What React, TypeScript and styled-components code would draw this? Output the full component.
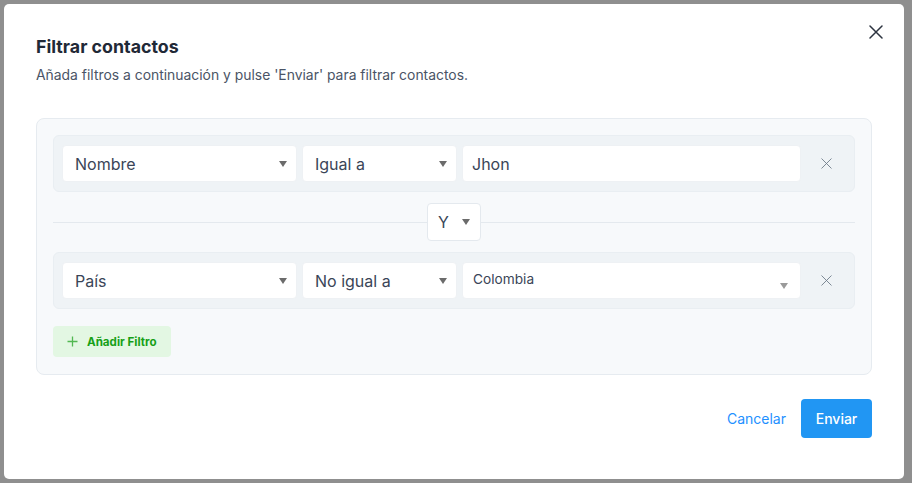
import React from "react";
import styled, { createGlobalStyle } from "styled-components";

const Global = createGlobalStyle`
  html, body { margin: 0; padding: 0; background: #8f8f8f; }
  body { font-family: Inter, "Noto Sans", "Liberation Sans", sans-serif; }
  * { box-sizing: border-box; }
`;

const Backdrop = styled.div`
  width: 912px;
  height: 483px;
  padding: 4px 8px 4px 4px;
  background: #8f8f8f;
  overflow: hidden;
`;

const Modal = styled.div`
  position: relative;
  width: 900px;
  height: 475px;
  background: #fff;
  border-radius: 5px;
  padding: 31px 32px 0 32px;
  display: flex;
  flex-direction: column;
`;

const CloseBtn = styled.button`
  position: absolute;
  top: 16px;
  right: 16px;
  width: 24px;
  height: 24px;
  border: 0;
  background: none;
  padding: 0;
  display: flex;
  align-items: center;
  justify-content: center;
  color: #2d3440;
`;

const Title = styled.h2`
  margin: 0;
  font-size: 17.8px;
  line-height: 24px;
  font-weight: 700;
  color: #1f2937;
`;

const Subtitle = styled.p`
  margin: 6px 0 0;
  font-size: 13.9px;
  line-height: 20px;
  color: #4a5466;
`;

const Panel = styled.div`
  margin-top: 33px;
  background: #f7f9fb;
  border: 1px solid #e6ebf0;
  border-radius: 8px;
  padding: 16px 16px 17px 16px;
`;

const Row = styled.div`
  display: grid;
  grid-template-columns: 235px 155px 339px 1fr;
  column-gap: 5px;
  align-items: center;
  background: #eff3f6;
  border: 1px solid #e9eef2;
  border-radius: 6px;
  padding: 9px 8px;
`;

const Select = styled.div<{ $small?: boolean }>`
  height: 37px;
  background: #fff;
  border-radius: 4px;
  border: 1px solid #eef1f4;
  display: flex;
  align-items: ${(p) => (p.$small ? "flex-start" : "center")};
  justify-content: space-between;
  padding: ${(p) => (p.$small ? "8px 12px 0 10px" : "0 9px 0 12px")};
  font-size: ${(p) => (p.$small ? "13.7px" : "16px")};
  color: #3a4557;
`;

const Input = styled.div`
  height: 37px;
  background: #fff;
  border-radius: 4px;
  border: 1px solid #eef1f4;
  display: flex;
  align-items: center;
  padding: 0 9px;
  font-size: 16px;
  color: #3a4557;
`;

const Caret = styled.span<{ $light?: boolean; $low?: boolean }>`
  width: 0;
  height: 0;
  border-left: 4.5px solid transparent;
  border-right: 4.5px solid transparent;
  border-top: 6px solid ${(p) => (p.$light ? "#9a9a9a" : "#6b6b6b")};
  margin-top: ${(p) => (p.$low ? "12px" : "0")};
`;

const RemoveBtn = styled.button`
  border: 0;
  background: none;
  padding: 0;
  display: flex;
  align-items: center;
  justify-content: center;
  height: 37px;
  color: #6b7785;
`;

const Connector = styled.div`
  display: flex;
  align-items: center;
  justify-content: center;
  margin: 11px 0 11px;
  position: relative;
  &::before {
    content: "";
    position: absolute;
    left: 0;
    right: 0;
    top: 50%;
    border-top: 1px solid #e4e9ee;
  }
`;

const LogicSelect = styled.div`
  position: relative;
  z-index: 1;
  width: 54px;
  height: 38px;
  background: #fff;
  border: 1px solid #e4e9ee;
  border-radius: 4px;
  display: flex;
  align-items: center;
  justify-content: space-between;
  padding: 0 10px 0 10px;
  font-size: 16px;
  color: #3a4557;
`;

const AddButton = styled.button`
  margin-top: 17px;
  height: 31px;
  width: 118px;
  border: 0;
  border-radius: 4px;
  background: #e3f7e3;
  color: #17a017;
  font-family: inherit;
  font-size: 11.6px;
  font-weight: 700;
  display: flex;
  align-items: center;
  gap: 9px;
  padding: 0 0 0 14px;
`;

const Footer = styled.div`
  margin-top: 24px;
  display: flex;
  justify-content: flex-end;
  align-items: center;
  gap: 8px;
`;

const LinkButton = styled.button`
  border: 0;
  background: none;
  color: #1e90ff;
  font-family: inherit;
  font-size: 14px;
  padding: 0 7px;
  height: 39px;
`;

const PrimaryButton = styled.button`
  border: 0;
  background: #2196f3;
  color: #fff;
  font-family: inherit;
  font-size: 14px;
  font-weight: 500;
  border-radius: 4px;
  width: 71px;
  height: 39px;
`;

const XIcon = ({ size, stroke }: { size: number; stroke: number }) => (
  <svg width={size} height={size} viewBox="0 0 14 14" fill="none">
    <path d="M1 1L13 13M13 1L1 13" stroke="currentColor" strokeWidth={stroke} strokeLinecap="round" />
  </svg>
);

const PlusIcon = () => (
  <svg width="11" height="11" viewBox="0 0 11 11" fill="none">
    <path d="M5.5 0.5V10.5M0.5 5.5H10.5" stroke="#52b852" strokeWidth="1.3" />
  </svg>
);

export default function App() {
  return (
    <>
      <Global />
      <Backdrop>
        <Modal>
          <CloseBtn aria-label="Cerrar">
            <XIcon size={14} stroke={1.5} />
          </CloseBtn>
          <Title>Filtrar contactos</Title>
          <Subtitle>Añada filtros a continuación y pulse 'Enviar' para filtrar contactos.</Subtitle>
          <Panel>
            <Row>
              <Select>
                Nombre
                <Caret />
              </Select>
              <Select>
                Igual a
                <Caret />
              </Select>
              <Input>Jhon</Input>
              <RemoveBtn aria-label="Quitar">
                <XIcon size={11} stroke={1.1} />
              </RemoveBtn>
            </Row>
            <Connector>
              <LogicSelect>
                Y
                <Caret />
              </LogicSelect>
            </Connector>
            <Row>
              <Select>
                País
                <Caret />
              </Select>
              <Select>
                No igual a
                <Caret />
              </Select>
              <Select $small>
                Colombia
                <Caret $light $low />
              </Select>
              <RemoveBtn aria-label="Quitar">
                <XIcon size={11} stroke={1.1} />
              </RemoveBtn>
            </Row>
            <AddButton>
              <PlusIcon />
              Añadir Filtro
            </AddButton>
          </Panel>
          <Footer>
            <LinkButton>Cancelar</LinkButton>
            <PrimaryButton>Enviar</PrimaryButton>
          </Footer>
        </Modal>
      </Backdrop>
    </>
  );
}
